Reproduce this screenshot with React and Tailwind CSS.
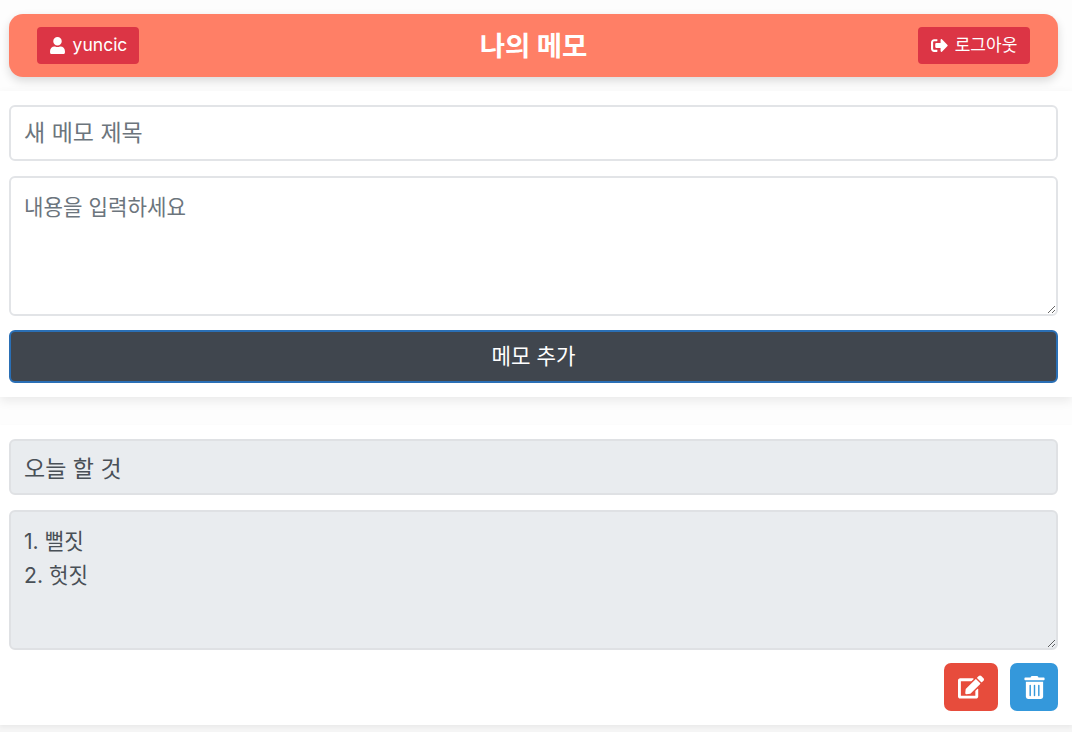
import React from "react";
import { FaUser, FaSignOutAlt, FaEdit, FaTrashAlt } from "react-icons/fa";

export default function App() {
  return (
    <div className="min-h-[732px] bg-[#f5f5f5] font-['Inter','Noto_Sans_CJK_KR',sans-serif]">
      <div className="bg-[#fdfdfd] h-[91px] pl-[9px] pr-[14px] pt-[14px]">
        <header className="h-[63px] bg-[#ff7f66] rounded-[14px] shadow-[0_4px_10px_rgba(0,0,0,0.14)] grid grid-cols-[1fr_auto_1fr] items-center px-[28px]">
          <button className="justify-self-start h-[37px] w-[102px] bg-[#dc3545] rounded-[4px] text-white text-[17.5px] flex items-center justify-center gap-[7px]">
            <FaUser className="text-[17px]" />
            <span>yuncic</span>
          </button>
          <h1 className="text-white text-[27.5px] font-bold relative top-[1px]">나의 메모</h1>
          <button className="justify-self-end h-[37px] w-[112px] bg-[#dc3545] rounded-[4px] text-white text-[17px] flex items-center justify-center gap-[7px]">
            <FaSignOutAlt className="text-[17px]" />
            <span>로그아웃</span>
          </button>
        </header>
      </div>

      <section className="relative z-10 bg-white pl-[9px] pr-[14px] pt-[14px] pb-[14px] h-[306px] flex flex-col shadow-[0_4px_10px_rgba(0,0,0,0.08)]">
        <input
          placeholder="새 메모 제목"
          className="h-[56px] w-full shrink-0 border-2 border-[#e2e4e7] rounded-[6px] px-[13px] text-[23px] text-[#495057] placeholder:text-[#6c757d] outline-none"
        />
        <textarea
          placeholder="내용을 입력하세요"
          className="mt-[15px] h-[140px] w-full shrink-0 border-2 border-[#e2e4e7] rounded-[6px] px-[13px] pt-[12px] text-[21.2px] leading-[34px] text-[#495057] placeholder:text-[#6c757d] outline-none"
        />
        <button className="mt-[14px] h-[53px] w-full shrink-0 bg-[#40464e] border-2 border-[#2a6fb5] rounded-[6px] text-white text-[21.2px]">
          메모 추가
        </button>
      </section>

      <div className="h-[28px] bg-[#fdfdfd]" />

      <section className="bg-white pl-[9px] pr-[14px] pt-[14px] h-[300px] flex flex-col shadow-[0_2px_4px_rgba(0,0,0,0.05)]">
        <input
          disabled
          defaultValue="오늘 할 것"
          className="h-[56px] w-full shrink-0 bg-[#e9ecef] border-2 border-[#dfe1e4] rounded-[6px] px-[13px] text-[23px] text-[#495057] outline-none"
        />
        <textarea
          disabled
          defaultValue={"1. 뻘짓\n2. 헛짓"}
          className="mt-[15px] h-[140px] w-full shrink-0 bg-[#e9ecef] border-2 border-[#dfe1e4] rounded-[6px] px-[13px] pt-[12px] text-[21.2px] leading-[34px] text-[#495057] outline-none"
        />
        <div className="mt-[13px] flex justify-end gap-[12px]">
          <button className="h-[48px] w-[54px] bg-[#e74c3c] rounded-[7px] text-white flex items-center justify-center">
            <FaEdit className="text-[26px]" />
          </button>
          <button className="h-[48px] w-[48px] bg-[#3498db] rounded-[7px] text-white flex items-center justify-center">
            <FaTrashAlt className="text-[23px]" />
          </button>
        </div>
      </section>
    </div>
  );
}
